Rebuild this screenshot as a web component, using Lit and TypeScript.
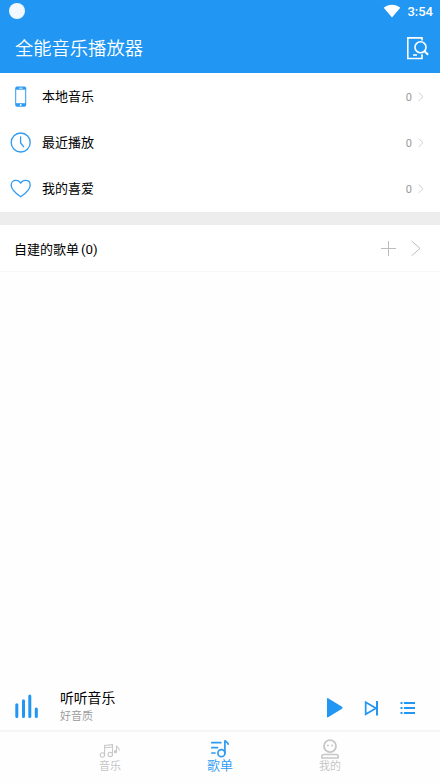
import { LitElement, html, css, svg } from "lit";
import { customElement } from "lit/decorators.js";
import { classMap } from "lit/directives/class-map.js";

const phone = svg`<svg width="22" height="22" viewBox="0 0 22 22" fill="none">
  <rect x="5.2" y="0.500" width="11" height="20.200" rx="1.8" fill="#2f9bf2"/>
  <rect x="6.2" y="3.7" width="9" height="13.500" fill="#fff"/>
  <path d="M9 2.200h3.600" stroke="#fff" stroke-width=".8"/><circle cx="10.700" cy="19" r=".9" fill="#fff"/></svg>`;
const clock = svg`<svg width="22" height="22" viewBox="0 0 22 22" fill="none" stroke="#2f9bf2" stroke-width="1.3" stroke-linecap="round">
  <circle cx="10.700" cy="10.500" r="9.5"/><path d="M10.6 4.800v6.2l3 3.7"/></svg>`;
const heart = svg`<svg width="22" height="22" viewBox="0 0 22 22" fill="none" stroke="#2f9bf2" stroke-width="1.3" stroke-linejoin="round">
  <path d="M10.700 18.800C7.200 16.300 1.200 12 1.200 7.200c0-3 2-4.800 4.600-4.800 2.200 0 3.900 1 4.900 2.700 1-1.700 2.700-2.700 4.900-2.700 2.600 0 4.600 1.800 4.600 4.800 0 4.800-6 9.100-9.500 11.600z"/></svg>`;
const chevron = svg`<svg width="6" height="10" viewBox="0 0 6 10" fill="none" stroke="#c4c4c4" stroke-width=".8"><path d="M.7.500L5 4.700 .7 8.900"/></svg>`;

const rows = [
  { icon: phone, label: "本地音乐", count: 0 },
  { icon: clock, label: "最近播放", count: 0 },
  { icon: heart, label: "我的喜爱", count: 0 },
];

const musicIcon = svg`<svg width="22" height="15" viewBox="0 0 22 15" fill="none" stroke="#c8c8c8" stroke-width="1.1">
  <circle cx="3.400" cy="12" r="2.200"/><circle cx="11.300" cy="11.400" r="2.200"/>
  <path d="M5.600 12V2.400l7.900-.8v9.800M5.600 4.800l7.900-.8M17.500 8.500v-6c0 2 3.200 2.300 3 5"/><circle cx="16.500" cy="8.700" r="1.100" fill="#c8c8c8"/></svg>`;
const listIcon = svg`<svg width="22" height="20" viewBox="0 0 22 20" fill="none" stroke="#2f9bf2" stroke-width="1.700" stroke-linecap="round">
  <path d="M2.800 3.700h9M2.800 8.700h5.700M2.800 14h3.200"/><circle cx="12.400" cy="14.200" r="3.500"/><path d="M15.900 14.200V1.200c.2 2 3.100 1.400 3.300 3.900"/></svg>`;
const meIcon = svg`<svg width="20" height="21" viewBox="0 0 20 21" fill="none" stroke="#c8c8c8" stroke-width="1.900">
  <circle cx="10" cy="8.100" r="6"/><path d="M1.800 20v-1.500q0-2 2-2h12.400q2 0 2 2v1.500z" stroke-width="1.600" stroke-linejoin="round"/>
  <circle cx="7.900" cy="7.500" r="1" fill="#c8c8c8" stroke="none"/><circle cx="12.100" cy="7.500" r="1" fill="#c8c8c8" stroke="none"/></svg>`;

const tabs = [
  { icon: musicIcon, label: "音乐", active: false },
  { icon: listIcon, label: "歌单", active: true },
  { icon: meIcon, label: "我的", active: false },
];

@customElement("app-root")
export class AppRoot extends LitElement {
  static styles = css`
    :host { display: flex; flex-direction: column; height: 783px; background: #fefefe; color: #000;
      font-family: Roboto, "Noto Sans CJK SC", sans-serif; overflow: hidden; }
    svg { display: block; flex: none; }
    .header { height: 73px; background: #2196f3; color: #fff; display: flex; flex-direction: column; flex: none; }
    .status { height: 22px; display: flex; align-items: center; padding: 0 7px 0 9px; }
    .dot { width: 16px; height: 16px; border-radius: 50%; background: #f2f8ff; margin-right: auto; }
    .time { font-size: 13px; font-weight: 500; line-height: 22px; margin-left: 6px; padding-top: 1px; }
    .bar { flex: 1; display: flex; align-items: center; justify-content: space-between; padding: 0 11px 0 15px; }
    .title { font-size: 18.3px; line-height: 24px; font-weight: 350; padding-top: 2px; }
    .list { padding-top: 1px; background: #fff; }
    .row { height: 46px; display: flex; align-items: center; padding: 0 16px 0 10px; }
    .label { font-size: 13px; line-height: 18px; margin-left: 10px; flex: 1; }
    .count { font-size: 11px; color: #999; margin-right: 6px; }
    .gap { height: 13px; background: #ededed; flex: none; }
    .own { height: 46px; border-bottom: 1px solid #f7f7f7; display: flex; align-items: center; padding: 0 19px 0 14px; background: #fff; }
    .own-label { font-size: 13px; flex: 1; }
    .num { font-size: 13.3px; margin-left: 2px; }
    .plus { margin-right: 15px; }
    .space { flex: 1; }
    .player { height: 46px; display: flex; align-items: center; padding: 0 25px 0 15px; flex: none; }
    .song { flex: 1; margin-left: 21px; padding-top: 2px; }
    .name { font-size: 13.8px; line-height: 17px; }
    .sub { font-size: 11px; line-height: 19px; color: #999; font-weight: 350; }
    .play { margin-right: 21px; }
    .next { margin-right: 21px; }
    .tabs { height: 51px; border-top: 2px solid #f5f5f5; display: flex; flex: none; }
    .tabs::before, .tabs::after { content: ""; width: 55px; }
    .tab { flex: 1; display: flex; flex-direction: column; align-items: center; color: #c4c4c4; font-size: 11px; font-weight: 350; }
    .glyph { height: 27px; display: flex; align-items: flex-end; }
    .tab:first-child .glyph { padding-bottom: 1px; box-sizing: border-box; }
    .caption { line-height: 15px; }
    .active { color: #2f9bf2; font-size: 13px; }
    .active .caption { line-height: 13px; }
  `;

  render() {
    return html`
      <div class="header">
        <div class="status">
          <span class="dot"></span>
          <svg width="18" height="14" viewBox="0 0 18 14"><path d="M.700 3.700C5.500-.2 12.500-.2 17.300 3.700L9 13.500z" fill="#fff"/></svg>
          <span class="time">3:54</span>
        </div>
        <div class="bar">
          <span class="title">全能音乐播放器</span>
          <svg width="23" height="24" viewBox="0 0 23 24" fill="none" stroke="#fff" stroke-width="1.600">
            <path d="M16 4.500V1.900H1.800v20.600H16v-4.300"/><path d="M7 19h4"/>
            <circle cx="14.500" cy="11.200" r="5.500"/><path d="M18.500 15.200l3.600 3.500" stroke-width="2"/></svg>
        </div>
      </div>
      <div class="list">
        ${rows.map((r) => html`<div class="row">${r.icon}<span class="label">${r.label}</span><span class="count">${r.count}</span>${chevron}</div>`)}
      </div>
      <div class="gap"></div>
      <div class="own">
        <span class="own-label">自建的歌单<span class="num">(0)</span></span>
        <svg class="plus" width="15" height="16" viewBox="0 0 15 16" stroke="#bdbdbd"><path d="M0 8.500h15M7.500 1v15"/></svg>
        <svg width="10" height="16" viewBox="0 0 10 16" fill="none" stroke="#bdbdbd"><path d="M.500.900L9 8.400 .500 15.900"/></svg>
      </div>
      <div class="space"></div>
      <div class="player">
        <svg width="24" height="26" viewBox="0 0 24 26" stroke="#2196f3" stroke-width="3" stroke-linecap="round">
          <path d="M1.800 10.800v11.700M8.500 6.700v15.800M14.800 2v20.500M21.300 15v7.500"/></svg>
        <div class="song"><div class="name">听听音乐</div><div class="sub">好音质</div></div>
        <svg class="play" width="16" height="22" viewBox="0 -2.500 16 22" fill="#2196f3"><path d="M0 .500Q0-1 1.500 0L15 8.200q1.200 1 0 2L1.500 18.500Q0 19.500 0 18z"/></svg>
        <svg class="next" width="15" height="18" viewBox="0 -2.500 15 18" fill="none" stroke="#2196f3" stroke-width="1.700"><path d="M1.700 1.800v12L12 7.800z"/><path d="M13 .600v14.400" stroke-width="2"/></svg>
        <svg width="15" height="16" viewBox="0 -2.500 15 16" stroke="#2196f3" stroke-width="1.800"><path d="M.500 1.500h2M4 1.500h11M.500 6.500h2M4 6.500h11M.500 11.500h2M4 11.500h11"/></svg>
      </div>
      <div class="tabs">
        ${tabs.map((t) => html`<div class=${classMap({ tab: true, active: t.active })}><div class="glyph">${t.icon}</div><span class="caption">${t.label}</span></div>`)}
      </div>
    `;
  }
}
